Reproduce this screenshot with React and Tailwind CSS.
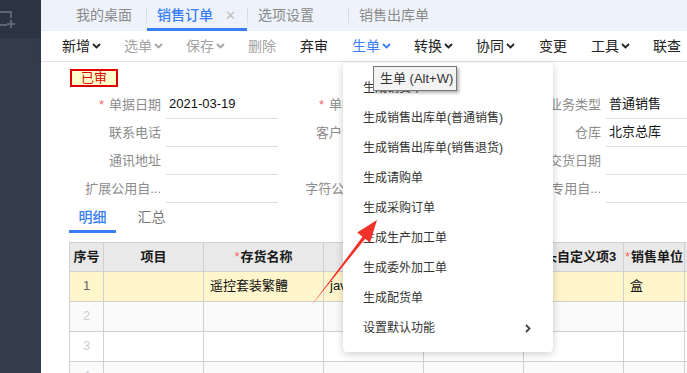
import React from 'react';

// toolbar entries: null = separator
const toolbar = [
  { label: '新增', drop: true, tone: 'dark' },
  { label: '选单', drop: true, tone: 'muted' },
  { label: '保存', drop: true, tone: 'muted' },
  { label: '删除', tone: 'muted' },
  null,
  { label: '弃审', tone: 'dark' },
  null,
  { label: '生单', drop: true, tone: 'blue' },
  { label: '转换', drop: true, tone: 'dark' },
  { label: '协同', drop: true, tone: 'dark' },
  null,
  { label: '变更', tone: 'dark' },
  null,
  { label: '工具', drop: true, tone: 'dark' },
  { label: '联查', tone: 'dark' },
];

const toneClass = {
  dark: 'text-[#222]',
  muted: 'text-[#a3a3a3]',
  blue: 'text-[#3a7ef5]',
};

const formRows = [
  [
    { label: '单据日期', req: true, value: '2021-03-19' },
    { label: '单据编号', req: true },
    { label: '业务类型', value: '普通销售' },
  ],
  [{ label: '联系电话' }, { label: '客户订单号' }, { label: '仓库', value: '北京总库' }],
  [{ label: '通讯地址' }, { label: '备注' }, { label: '交货日期' }],
  [{ label: '扩展公用自...' }, { label: '字符公用自...' }, { label: '扩展专用自...' }],
];

const columns = [
  { title: '序号' },
  { title: '项目' },
  { title: '存货名称', req: true },
  { title: '规格型号' },
  { title: '含税单价' },
  { title: '表头自定义项3' },
  { title: '销售单位', req: true },
  { title: '数量' },
];

const rows = [
  { no: '1', cells: ['', '遥控套装繁體', 'java遥控器', '', '', '盒', ''], bg: 'bg-[#fff6cc]' },
  { no: '2', cells: ['', '', '', '', '', '', ''], bg: 'bg-[#fafafa]' },
  { no: '3', cells: ['', '', '', '', '', '', ''], bg: 'bg-white' },
  { no: '4', cells: ['', '', '', '', '', '', ''], bg: 'bg-[#fafafa]' },
];

const menuItems = [
  '生成销货单',
  '生成销售出库单(普通销售)',
  '生成销售出库单(销售退货)',
  '生成请购单',
  '生成采购订单',
  '生成生产加工单',
  '生成委外加工单',
  '生成配货单',
];

function Chevron() {
  return (
    <svg width="9" height="6" viewBox="0 0 9 6" className="ml-[2px]">
      <path d="M1 1l3.5 3.5L8 1" fill="none" stroke="currentColor" strokeWidth="1.8" />
    </svg>
  );
}

function Sidebar() {
  return (
    <div className="w-[41px] shrink-0 flex flex-col bg-[#333d4a]">
      <div className="h-[38px] bg-[#2b3441] relative">
        <svg width="16" height="20" viewBox="0 0 16 20" className="absolute left-0 top-[10px]">
          <path d="M-2 2h13v6M7 15H-2V2" fill="none" stroke="#5d6673" strokeWidth="2" />
          <path d="M11 10v8M7 14h8" fill="none" stroke="#5d6673" strokeWidth="2" />
        </svg>
      </div>
    </div>
  );
}

function TabBar() {
  return (
    <div className="h-[31px] bg-[#eef2fa] flex items-stretch pl-[4px] text-[14px]">
      <div className="w-[101px] flex items-center pl-[31px] text-[#8a8a8a] border-r border-transparent">
        我的桌面
      </div>
      <div className="w-px my-[8px] bg-[#d8dce4]" />
      <div className="w-[100px] flex items-center pl-[10px] text-[#3a7ef5] font-medium border-b-[3px] border-[#3a7ef5] pt-[3px]">
        销售订单
        <span className="ml-[12px] text-[#c0c0c0] text-[13px] font-normal">✕</span>
      </div>
      <div className="w-px my-[8px] bg-[#d8dce4]" />
      <div className="w-[100px] flex items-center pl-[10px] text-[#8a8a8a]">选项设置</div>
      <div className="w-px my-[8px] bg-[#d8dce4]" />
      <div className="w-[100px] flex items-center pl-[10px] text-[#8a8a8a]">销售出库单</div>
    </div>
  );
}

function Toolbar() {
  return (
    <div className="h-[31px] bg-white flex items-center pl-[9.5px] text-[14px] border-b border-[#e2e2e2] shadow-[0_1px_2px_rgba(0,0,0,0.06)] whitespace-nowrap">
      {toolbar.map((item, i) =>
        item ? (
          <div key={i} className={`flex items-center px-[11.5px] ${toneClass[item.tone]}`}>
            {item.label}
            {item.drop && <Chevron />}
          </div>
        ) : (
          <div key={i} className="w-px h-[15px] bg-[#dcdcdc] mx-[0.5px]" />
        )
      )}
    </div>
  );
}

function Field({ label, req, value }) {
  return (
    <div className="w-[220px] shrink-0 flex items-stretch h-[28px]">
      <div className="w-[103px] flex items-center justify-end text-[#8c8c8c] whitespace-nowrap">
        {req && <span className="text-[#f56c6c] mr-[5px]">*</span>}
        {label}
      </div>
      <div className="ml-[5px] w-[112px] border-b border-[#dedede] flex items-center pl-[3px] text-[#111]">
        {value}
      </div>
    </div>
  );
}

function DetailTable() {
  return (
    <div className="mt-[9px] w-[800px] border-l border-t border-[#d0d0d0] text-[13px]">
      <div className="grid grid-cols-[34px_100px_120px_100px_100px_100px_61px_100px] bg-[#e9e9e9] h-[29px]">
        {columns.map((c, i) => (
          <div key={i} className="border-r border-b border-[#d0d0d0] flex items-center justify-center font-bold text-[#1a1a1a] whitespace-nowrap overflow-hidden">
            {c.req && <span className="text-[#f56c6c] font-normal mr-[1px]">*</span>}
            {c.title}
          </div>
        ))}
      </div>
      {rows.map((r, ri) => (
        <div key={ri} className={`grid grid-cols-[34px_100px_120px_100px_100px_100px_61px_100px] h-[30px] ${r.bg}`}>
          <div className={`border-r border-b border-[#d0d0d0] flex items-center justify-center ${ri === 0 ? 'text-[#666]' : 'text-[#cfcfcf]'}`}>
            {r.no}
          </div>
          {r.cells.map((v, ci) => (
            <div key={ci} className="border-r border-b border-[#d0d0d0] flex items-center pl-[6px] text-[#111] whitespace-nowrap overflow-hidden">
              {v}
            </div>
          ))}
        </div>
      ))}
    </div>
  );
}

function Content() {
  return (
    <div className="flex-1 bg-white overflow-hidden pt-[6px] text-[13px]">
      <div className="pl-[29px]">
        <div className="inline-flex items-center justify-center w-[48px] h-[18px] border-2 border-[#e00000] bg-[#ffffcc] text-[#e00000] text-[13px] leading-none">
          已审
        </div>
      </div>
      <div className="mt-[3px] pl-[17px] flex flex-col">
        {formRows.map((row, i) => (
          <div key={i} className="flex">
            {row.map((f, j) => (
              <Field key={j} {...f} />
            ))}
          </div>
        ))}
      </div>
      <div className="pl-[28px]">
        <div className="flex gap-[12px] h-[30px] text-[14px]">
          <div className="w-[47px] flex items-center justify-center text-[#3a7ef5] font-medium border-b-[3px] border-[#3a7ef5] pt-[3px]">
            明细
          </div>
          <div className="w-[47px] flex items-center justify-center text-[#777]">汇总</div>
        </div>
        <DetailTable />
      </div>
    </div>
  );
}

function GenerateMenu() {
  return (
    <div className="absolute left-[343px] top-[63px] w-[210px] h-[289px] bg-white rounded-[4px] shadow-[0_2px_8px_rgba(0,0,0,0.2)] py-[10px] text-[12px] text-[#333]">
      {menuItems.map((m) => (
        <div key={m} className="h-[30px] flex items-center pl-[20px]">
          {m}
        </div>
      ))}
      <div className="h-[30px] flex items-center pl-[20px] pr-[22px] justify-between">
        设置默认功能
        <svg width="6" height="9" viewBox="0 0 6 9">
          <path d="M1 1l3.5 3.5L1 8" fill="none" stroke="#444" strokeWidth="1.8" />
        </svg>
      </div>
    </div>
  );
}

function Tooltip() {
  return (
    <div className="absolute left-[373px] top-[66px] w-[84px] h-[25px] bg-[#f3f3f3] border border-[#777] shadow-[2px_2px_3px_rgba(0,0,0,0.3)] flex items-center pl-[6px] text-[13px] text-[#333] whitespace-nowrap">
      生单 (Alt+W)
    </div>
  );
}

function RedArrow() {
  return (
    <svg className="absolute inset-0 pointer-events-none" width="687" height="373" viewBox="0 0 687 373">
      <polygon points="311,306 362.5,236.8 357.2,232.6 377,220 370,242.4 365.2,238.8" fill="#f2312a" />
    </svg>
  );
}

export default function App() {
  return (
    <div className="relative w-[687px] h-[373px] overflow-hidden flex font-['Liberation_Sans','Noto_Sans_CJK_SC',sans-serif]">
      <Sidebar />
      <div className="flex-1 flex flex-col min-w-0">
        <TabBar />
        <Toolbar />
        <Content />
      </div>
      <GenerateMenu />
      <Tooltip />
      <RedArrow />
    </div>
  );
}
